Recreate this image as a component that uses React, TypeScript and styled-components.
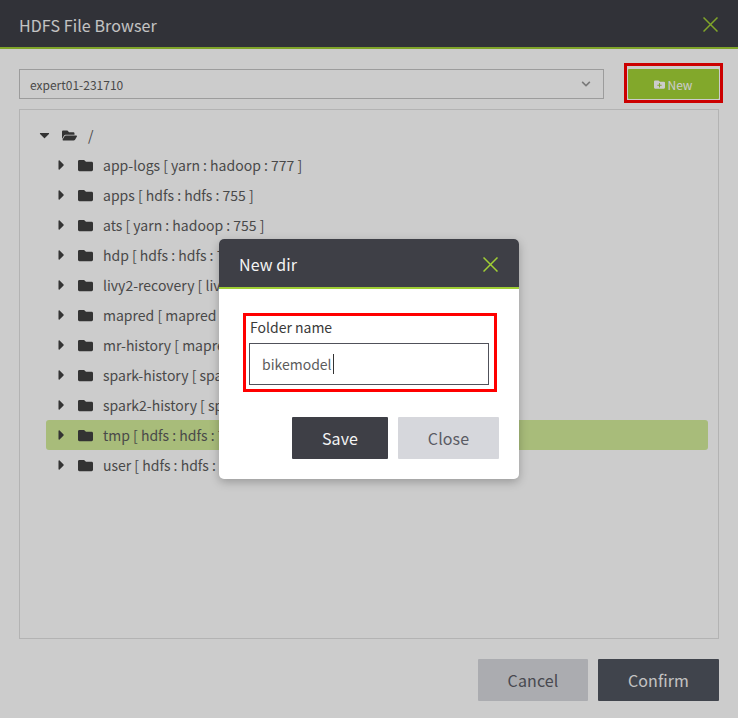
import React from 'react';
import styled, { createGlobalStyle } from 'styled-components';
import { FaCaretDown, FaCaretRight, FaChevronDown, FaFolder, FaFolderOpen, FaFolderPlus } from 'react-icons/fa';

const GlobalStyle = createGlobalStyle`
  html, body {
    margin: 0;
    padding: 0;
    background: #fff;
  }
  * {
    box-sizing: border-box;
  }
  body {
    font-family: "Noto Sans CJK KR", "Noto Sans", sans-serif;
  }
`;

const Page = styled.div`
  position: relative;
  width: 738px;
  height: 718px;
  overflow: hidden;
  display: flex;
  flex-direction: column;
  background: #fff;
`;

const Overlay = styled.div`
  position: absolute;
  inset: 0;
  background: rgba(0, 0, 0, 0.2);
  display: flex;
  align-items: flex-start;
  justify-content: center;
  padding-top: 239px;
`;

const Header = styled.header<{ $height: number; $inset: number; $end: number }>`
  height: ${p => p.$height}px;
  flex: none;
  display: flex;
  align-items: center;
  justify-content: space-between;
  padding: 2px ${p => p.$end}px 0 ${p => p.$inset}px;
  background: #3e3f46;
  border-bottom: 2px solid #a0cf35;
`;

const Title = styled.h1`
  margin: 0;
  font-size: 16px;
  line-height: 24px;
  font-weight: 400;
  letter-spacing: 0.1px;
  color: #f4f4f4;
`;

const CloseIcon = styled.svg`
  width: 15px;
  height: 15px;
  display: block;
  stroke: #a0cf35;
  stroke-width: 1.5;
  fill: none;
`;

const Body = styled.main`
  flex: 1;
  display: flex;
  flex-direction: column;
  padding: 20px 19px 17px;
`;

const Toolbar = styled.div`
  display: flex;
  align-items: stretch;
  justify-content: space-between;
  height: 30px;
  margin-bottom: 10px;
`;

const SelectBox = styled.div`
  width: 585px;
  display: flex;
  align-items: center;
  justify-content: space-between;
  padding: 0 12px 0 10px;
  border: 1px solid #c3c3c3;
  font-size: 12px;
  color: #5c5c5c;
  background: #fff;
`;

const SelectArrow = styled(FaChevronDown)`
  width: 10px;
  height: 10px;
  color: #999;
`;

const NewButton = styled.button`
  position: relative;
  width: 91px;
  padding: 0;
  border: 0;
  display: flex;
  align-items: center;
  justify-content: center;
  gap: 2px;
  background: #a3d236;
  color: #fff;
  font: inherit;
  font-size: 12px;
  border-radius: 1px;

  &::after {
    content: '';
    position: absolute;
    inset: -6px -4px -4px -4px;
    border: 3px solid #f00;
  }
`;

const TreePanel = styled.section`
  height: 530px;
  padding: 10px 10px 0 26px;
  border: 1px solid #e0e0e0;
  margin-bottom: 20px;
`;

const TreeRow = styled.div<{ $root?: boolean; $selected?: boolean }>`
  height: 30px;
  display: flex;
  align-items: center;
  padding-left: ${p => (p.$root ? 0 : 10)}px;
  margin-left: ${p => (p.$root ? -7 : 0)}px;
  border-radius: 3px;
  background: ${p => (p.$selected ? '#d2ec99' : 'transparent')};
  color: #5c5c5c;
  font-size: 14px;
`;

const Caret = styled.span`
  width: 11px;
  margin-right: 11px;
  display: flex;
  justify-content: center;
  font-size: 16px;
  color: #404040;
`;

const FolderGlyph = styled.span<{ $open?: boolean }>`
  width: ${p => (p.$open ? 17 : 15)}px;
  margin-right: 10px;
  display: flex;
  justify-content: center;
  font-size: 15px;
  color: #404040;
`;

const Footer = styled.footer`
  display: flex;
  justify-content: flex-end;
  gap: 10px;
`;

const ActionButton = styled.button<{ $width: number; $tone: 'dark' | 'slate' | 'light' }>`
  width: ${p => p.$width}px;
  height: 42px;
  padding: 0;
  border: 0;
  border-radius: 1px;
  font: inherit;
  font-size: 16px;
  letter-spacing: 0.1px;
  background: ${p => ({ dark: '#3e3f46', slate: '#51555f', light: '#d6d7dc' })[p.$tone]};
  color: ${p => (p.$tone === 'light' ? '#5a5b64' : '#f4f4f4')};
`;

const Modal = styled.div`
  width: 300px;
  height: 240px;
  background: #fff;
  border-radius: 5px;
  box-shadow: 0 3px 10px rgba(0, 0, 0, 0.25);
  overflow: hidden;
`;

const ModalBody = styled.div`
  padding: 29px 20px 0 30px;
`;

const FormGroup = styled.div`
  position: relative;
  width: 240px;
  margin-bottom: 32px;

  &::after {
    content: '';
    position: absolute;
    inset: -5px -8px -7px -6px;
    border: 3px solid #f00;
    pointer-events: none;
  }
`;

const Label = styled.div`
  height: 25px;
  padding-left: 1px;
  font-size: 14px;
  line-height: 18px;
  color: #3a3a3a;
`;

const NameField = styled.div`
  height: 42px;
  display: flex;
  align-items: center;
  padding-left: 12px;
  border: 1px solid #50515a;
  font-size: 14px;
  color: #5c5c5c;
`;

const TextCaret = styled.span`
  width: 1px;
  height: 20px;
  margin-left: 1px;
  background: #333;
`;

const ModalActions = styled.div`
  display: flex;
  justify-content: flex-end;
  gap: 10px;
`;

const rows = [
  'app-logs [ yarn : hadoop : 777 ]',
  'apps [ hdfs : hdfs : 755 ]',
  'ats [ yarn : hadoop : 755 ]',
  'hdp [ hdfs : hdfs : 755 ]',
  'livy2-recovery [ livy : hdfs : 700 ]',
  'mapred [ mapred : hdfs : 755 ]',
  'mr-history [ mapred : hadoop : 777 ]',
  'spark-history [ spark : hadoop : 777 ]',
  'spark2-history [ spark : hadoop : 777 ]',
  'tmp [ hdfs : hdfs : 777 ]',
  'user [ hdfs : hdfs : 755 ]',
];

const X: React.FC = () => (
  <CloseIcon viewBox="0 0 15 15">
    <path d="M0.5 0.5 L14.5 14.5 M14.5 0.5 L0.5 14.5" />
  </CloseIcon>
);

const App: React.FC = () => (
  <>
    <GlobalStyle />
    <Page>
      <Header $height={49} $inset={19} $end={20}>
        <Title>HDFS File Browser</Title>
        <X />
      </Header>
      <Body>
        <Toolbar>
          <SelectBox>
            expert01-231710
            <SelectArrow />
          </SelectBox>
          <NewButton>
            <FaFolderPlus size={11} />
            New
          </NewButton>
        </Toolbar>
        <TreePanel>
          <TreeRow $root>
            <Caret><FaCaretDown /></Caret>
            <FolderGlyph $open><FaFolderOpen /></FolderGlyph>
            /
          </TreeRow>
          {rows.map(label => (
            <TreeRow key={label} $selected={label.startsWith('tmp')}>
              <Caret><FaCaretRight /></Caret>
              <FolderGlyph><FaFolder /></FolderGlyph>
              {label}
            </TreeRow>
          ))}
        </TreePanel>
        <Footer>
          <ActionButton $width={110} $tone="light">Cancel</ActionButton>
          <ActionButton $width={121} $tone="slate">Confirm</ActionButton>
        </Footer>
      </Body>
      <Overlay>
        <Modal>
          <Header $height={50} $inset={20} $end={21}>
            <Title>New dir</Title>
            <X />
          </Header>
          <ModalBody>
            <FormGroup>
              <Label>Folder name</Label>
              <NameField>
                bikemodel
                <TextCaret />
              </NameField>
            </FormGroup>
            <ModalActions>
              <ActionButton $width={96} $tone="dark">Save</ActionButton>
              <ActionButton $width={101} $tone="light">Close</ActionButton>
            </ModalActions>
          </ModalBody>
        </Modal>
      </Overlay>
    </Page>
  </>
);

export default App;
